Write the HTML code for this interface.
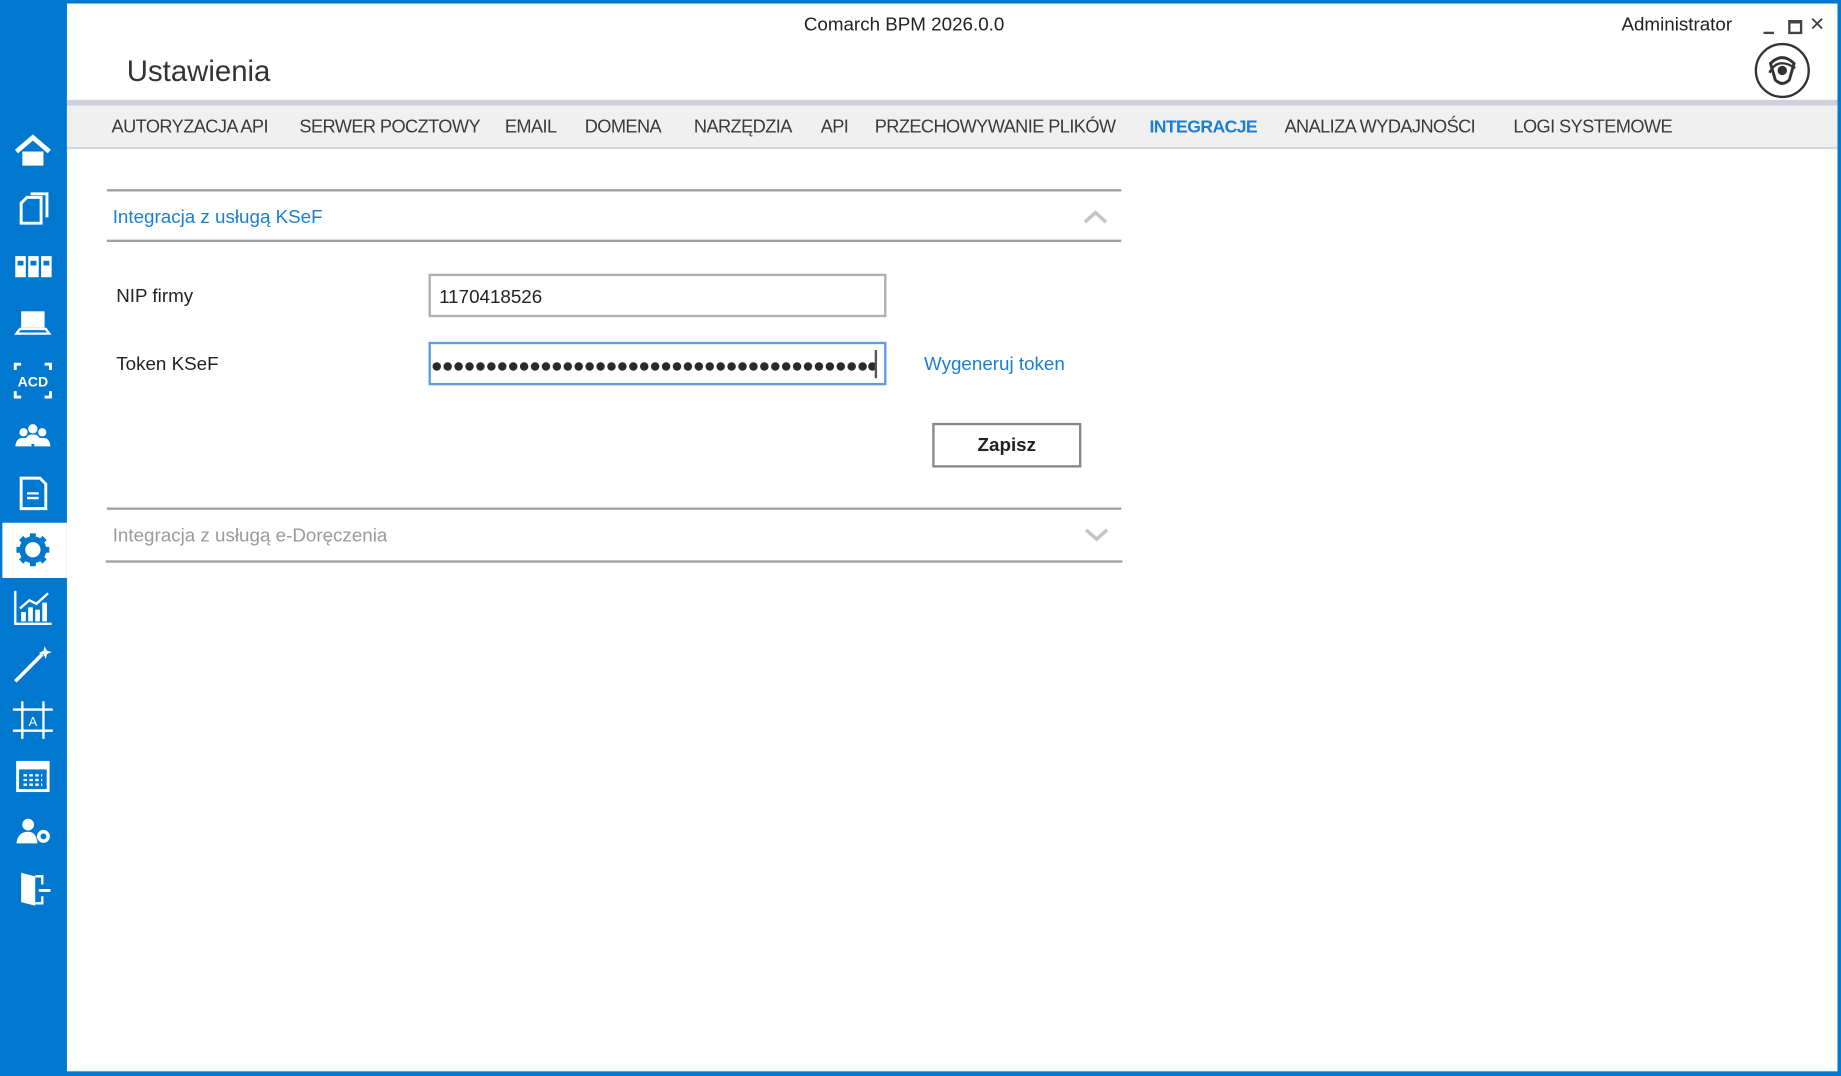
<!DOCTYPE html>
<html><head><meta charset="utf-8"><style>
html,body{margin:0;padding:0;overflow:hidden;background:#fff}
#w{position:absolute;left:0;top:0;width:1568px;height:916px;transform:scale(1.17411,1.1747);transform-origin:0 0;font-family:"Liberation Sans",sans-serif;color:#333;background:#fff}
.a{position:absolute;white-space:nowrap}
.tab{position:absolute;top:100px;font-size:15.5px;color:#3a3a3a;letter-spacing:-0.5px}
.ic{position:absolute;left:10px;width:36px;height:36px}
</style></head><body><div id="w">
<div class="a" style="left:0;top:0;width:1568px;height:3px;background:#0078d0"></div>
<div class="a" style="left:1565px;top:0;width:3px;height:916px;background:#0078d0"></div>
<div class="a" style="left:0;top:912px;width:1568px;height:4px;background:#0078d0"></div>
<div class="a" style="left:0;top:0;width:57px;height:916px;background:#0078d0"></div>
<div class="a" style="left:2px;top:445px;width:55px;height:47px;background:#fff"></div>

<div class="a" style="left:0;top:13px;width:1540px;text-align:center;font-size:16px;color:#222">Comarch BPM 2026.0.0</div>
<div class="a" style="left:1381px;top:13px;font-size:16px;color:#222">Administrator</div>
<div class="a" style="left:1502px;top:27px;width:9px;height:2px;background:#444"></div>
<div class="a" style="left:1523px;top:17px;width:8px;height:7px;border:2px solid #444;border-top-width:3px"></div>
<div class="a" style="left:1541px;top:11px;font-size:16px;color:#444">✕</div>
<svg class="a" style="left:1494px;top:36px" width="48" height="48" viewBox="0 0 48 48"><circle cx="24" cy="24" r="22.5" fill="none" stroke="#333" stroke-width="2"/><path d="M14 18 Q24 8 34 18 L30 32 Q24 38 18 32 Z" fill="none" stroke="#333" stroke-width="2.5"/><path d="M13 26 Q20 12 35 22" fill="none" stroke="#333" stroke-width="2"/><circle cx="24" cy="24" r="4" fill="#333"/></svg>
<div class="a" style="left:108px;top:47px;font-size:25px;color:#333">Ustawienia</div>

<div class="a" style="left:57px;top:85px;width:1508px;height:5px;background:#d0d0dc"></div>
<div class="a" style="left:57px;top:90px;width:1508px;height:35px;background:#f0f0f0"></div>
<div class="a" style="left:57px;top:125px;width:1508px;height:2px;background:#d6d6e0"></div>
<div class="tab" style="left:95px">AUTORYZACJA API</div>
<div class="tab" style="left:255px">SERWER POCZTOWY</div>
<div class="tab" style="left:430px">EMAIL</div>
<div class="tab" style="left:498px">DOMENA</div>
<div class="tab" style="left:591px">NARZĘDZIA</div>
<div class="tab" style="left:699px">API</div>
<div class="tab" style="left:745px">PRZECHOWYWANIE PLIKÓW</div>
<div class="tab" style="left:979px;color:#1a7fd4;font-weight:bold;font-size:15px">INTEGRACJE</div>
<div class="tab" style="left:1094px">ANALIZA WYDAJNOŚCI</div>
<div class="tab" style="left:1289px">LOGI SYSTEMOWE</div>

<div class="a" style="left:91px;top:161px;width:864px;height:2px;background:#a0a0a0"></div>
<div class="a" style="left:96px;top:177px;font-size:16px;color:#1a7fd4">Integracja z usługą KSeF</div>
<svg class="a" style="left:922px;top:178px" width="22" height="14"><path d="M2 11 L11 3 L20 11" fill="none" stroke="#c4c4c4" stroke-width="3"/></svg>
<div class="a" style="left:91px;top:204px;width:864px;height:2px;background:#a0a0a0"></div>
<div class="a" style="left:99px;top:244px;font-size:16px;color:#222">NIP firmy</div>
<div class="a" style="left:365px;top:233px;width:386px;height:33px;border:2px solid #b0b0b0"></div>
<div class="a" style="left:374px;top:245px;font-size:16px;color:#222">1170418526</div>
<div class="a" style="left:99px;top:302px;font-size:16px;color:#222">Token KSeF</div>
<div class="a" style="left:365px;top:291px;width:386px;height:33px;border:2px solid #5a9ee0"></div>
<svg class="a" style="left:368px;top:305px" width="380" height="14"><g fill="#2a2a2a" id="d"></g>
<script>/* no */</script>
<circle cx="4" cy="7" r="3.6" fill="#2a2a2a"/><circle cx="13.3" cy="7" r="3.6" fill="#2a2a2a"/><circle cx="22.6" cy="7" r="3.6" fill="#2a2a2a"/><circle cx="31.9" cy="7" r="3.6" fill="#2a2a2a"/><circle cx="41.2" cy="7" r="3.6" fill="#2a2a2a"/><circle cx="50.5" cy="7" r="3.6" fill="#2a2a2a"/><circle cx="59.8" cy="7" r="3.6" fill="#2a2a2a"/><circle cx="69.1" cy="7" r="3.6" fill="#2a2a2a"/><circle cx="78.4" cy="7" r="3.6" fill="#2a2a2a"/><circle cx="87.7" cy="7" r="3.6" fill="#2a2a2a"/><circle cx="97" cy="7" r="3.6" fill="#2a2a2a"/><circle cx="106.3" cy="7" r="3.6" fill="#2a2a2a"/><circle cx="115.6" cy="7" r="3.6" fill="#2a2a2a"/><circle cx="124.9" cy="7" r="3.6" fill="#2a2a2a"/><circle cx="134.2" cy="7" r="3.6" fill="#2a2a2a"/><circle cx="143.5" cy="7" r="3.6" fill="#2a2a2a"/><circle cx="152.8" cy="7" r="3.6" fill="#2a2a2a"/><circle cx="162.1" cy="7" r="3.6" fill="#2a2a2a"/><circle cx="171.4" cy="7" r="3.6" fill="#2a2a2a"/><circle cx="180.7" cy="7" r="3.6" fill="#2a2a2a"/><circle cx="190" cy="7" r="3.6" fill="#2a2a2a"/><circle cx="199.3" cy="7" r="3.6" fill="#2a2a2a"/><circle cx="208.6" cy="7" r="3.6" fill="#2a2a2a"/><circle cx="217.9" cy="7" r="3.6" fill="#2a2a2a"/><circle cx="227.2" cy="7" r="3.6" fill="#2a2a2a"/><circle cx="236.5" cy="7" r="3.6" fill="#2a2a2a"/><circle cx="245.8" cy="7" r="3.6" fill="#2a2a2a"/><circle cx="255.1" cy="7" r="3.6" fill="#2a2a2a"/><circle cx="264.4" cy="7" r="3.6" fill="#2a2a2a"/><circle cx="273.7" cy="7" r="3.6" fill="#2a2a2a"/><circle cx="283" cy="7" r="3.6" fill="#2a2a2a"/><circle cx="292.3" cy="7" r="3.6" fill="#2a2a2a"/><circle cx="301.6" cy="7" r="3.6" fill="#2a2a2a"/><circle cx="310.9" cy="7" r="3.6" fill="#2a2a2a"/><circle cx="320.2" cy="7" r="3.6" fill="#2a2a2a"/><circle cx="329.5" cy="7" r="3.6" fill="#2a2a2a"/><circle cx="338.8" cy="7" r="3.6" fill="#2a2a2a"/><circle cx="348.1" cy="7" r="3.6" fill="#2a2a2a"/><circle cx="357.4" cy="7" r="3.6" fill="#2a2a2a"/><circle cx="366.7" cy="7" r="3.6" fill="#2a2a2a"/><circle cx="375" cy="7" r="3.6" fill="#2a2a2a"/>
</svg>
<div class="a" style="left:745px;top:298px;width:2px;height:24px;background:#555"></div>
<div class="a" style="left:787px;top:302px;font-size:16px;color:#1a7fd4">Wygeneruj token</div>
<div class="a" style="left:794px;top:360px;width:123px;height:34px;border:2px solid #888;text-align:center;line-height:36px;font-size:16px;font-weight:bold;color:#222">Zapisz</div>
<div class="a" style="left:91px;top:432px;width:864px;height:2px;background:#a0a0a0"></div>
<div class="a" style="left:96px;top:448px;font-size:16px;color:#9a9a9a">Integracja z usługą e-Doręczenia</div>
<svg class="a" style="left:923px;top:448px" width="22" height="14"><path d="M2 3 L11 11 L20 3" fill="none" stroke="#c4c4c4" stroke-width="3"/></svg>
<div class="a" style="left:90px;top:477px;width:866px;height:2px;background:#a0a0a0"></div>

<svg class="ic" style="top:111px" viewBox="0 0 36 36"><path d="M4 18 L18 6 L32 18" fill="none" stroke="#fff" stroke-width="4"/><path d="M9 18 V30 H27 V18" fill="#fff"/></svg>
<svg class="ic" style="top:159px" viewBox="0 0 36 36"><path d="M8 14 L13 9 H25 V31 H8 Z" fill="none" stroke="#fff" stroke-width="2.5"/><path d="M16 6 H30 V26" fill="none" stroke="#fff" stroke-width="2.5"/></svg>
<svg class="ic" style="top:208px" viewBox="0 0 36 36"><rect x="3" y="10" width="9" height="18" fill="#fff"/><rect x="14" y="10" width="9" height="18" fill="#fff"/><rect x="25" y="10" width="9" height="18" fill="#fff"/><rect x="5" y="14" width="5" height="4" fill="#0078d0"/><rect x="16" y="14" width="5" height="4" fill="#0078d0"/><rect x="27" y="14" width="5" height="4" fill="#0078d0"/></svg>
<svg class="ic" style="top:257px" viewBox="0 0 36 36"><rect x="8" y="8" width="20" height="14" fill="#fff"/><path d="M4 27 H32 L29 23 H7 Z" fill="none" stroke="#fff" stroke-width="2"/></svg>
<svg class="ic" style="top:306px" viewBox="0 0 36 36"><path d="M3 9 V4 H8 M28 4 H33 V9 M33 27 V32 H28 M8 32 H3 V27" fill="none" stroke="#fff" stroke-width="2.5"/><text x="18" y="23" fill="#fff" font-size="12" font-weight="bold" text-anchor="middle" font-family="Liberation Sans">ACD</text></svg>
<svg class="ic" style="top:354px" viewBox="0 0 36 36"><circle cx="10" cy="14" r="3.5" fill="#fff"/><circle cx="18" cy="11" r="4" fill="#fff"/><circle cx="26" cy="14" r="3.5" fill="#fff"/><path d="M3 26 Q4 18 10 19 Q16 18 17 26Z M19 26 Q20 18 26 19 Q32 18 33 26Z M11 24 Q12 15 18 16 Q24 15 25 24Z" fill="#fff"/></svg>
<svg class="ic" style="top:402px" viewBox="0 0 36 36"><path d="M8 5 H24 L29 10 V31 H8 Z" fill="none" stroke="#fff" stroke-width="2.5"/><path d="M13 18 H23 M13 22 H23" stroke="#fff" stroke-width="2"/></svg>
<svg class="ic" style="top:450px" viewBox="0 0 36 36"><circle cx="18" cy="18" r="9" fill="none" stroke="#0078d0" stroke-width="5"/><path d="M18 4 V9 M18 27 V32 M4 18 H9 M27 18 H32 M8 8 L11 11 M25 25 L28 28 M28 8 L25 11 M8 28 L11 25" stroke="#0078d0" stroke-width="5"/></svg>
<svg class="ic" style="top:499px" viewBox="0 0 36 36"><path d="M3 4 V32 H34" fill="none" stroke="#fff" stroke-width="2"/><rect x="8" y="22" width="4" height="8" fill="#fff"/><rect x="14" y="18" width="4" height="12" fill="#fff"/><rect x="20" y="20" width="4" height="10" fill="#fff"/><rect x="26" y="14" width="4" height="16" fill="#fff"/><path d="M7 19 L15 12 L21 15 L31 6" fill="none" stroke="#fff" stroke-width="2"/></svg>
<svg class="ic" style="top:547px" viewBox="0 0 36 36"><path d="M3 33 L26 10" stroke="#fff" stroke-width="3"/><path d="M28 3 L30 7 L34 8 L30 10 L29 14 L27 10 L23 9 L27 7Z" fill="#fff"/></svg>
<svg class="ic" style="top:595px" viewBox="0 0 36 36"><path d="M9 2 V34 M27 2 V34 M1 9 H35 M1 27 H35" stroke="#fff" stroke-width="2"/><text x="18" y="23" fill="#fff" font-size="11" text-anchor="middle" font-family="Liberation Sans">A</text></svg>
<svg class="ic" style="top:643px" viewBox="0 0 36 36"><rect x="5" y="6" width="26" height="24" fill="none" stroke="#fff" stroke-width="2.5"/><rect x="5" y="6" width="26" height="6" fill="#fff"/><path d="M10 17 H26 M10 21 H26 M10 25 H26" stroke="#fff" stroke-width="2" stroke-dasharray="3 2"/></svg>
<svg class="ic" style="top:690px" viewBox="0 0 36 36"><circle cx="14" cy="12" r="5" fill="#fff"/><path d="M4 28 Q5 18 14 18 Q21 18 22 28Z" fill="#fff"/><circle cx="27" cy="22" r="4" fill="none" stroke="#fff" stroke-width="3"/></svg>
<svg class="ic" style="top:739px" viewBox="0 0 36 36"><path d="M8 4 L20 7 V32 L8 29 Z" fill="#fff"/><path d="M20 7 H26 V14 M26 24 V30 H20" fill="none" stroke="#fff" stroke-width="2"/><path d="M23 19 H33" stroke="#fff" stroke-width="2.5"/></svg>
</div></body></html>
